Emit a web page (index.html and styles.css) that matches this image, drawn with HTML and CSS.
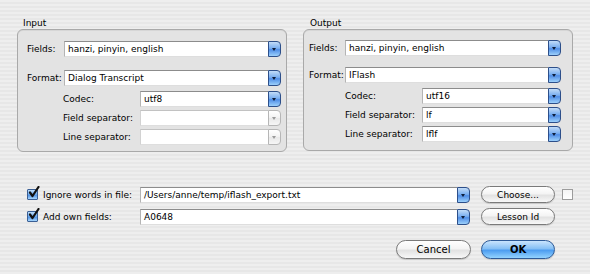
FILE: index.html
```html
<!DOCTYPE html>
<html lang="en">
<head>
    <meta charset="UTF-8">
    <title>Export</title>
    <link rel="stylesheet" href="styles.css">
</head>
<body>
    <div class="groups">
        <section class="group group-input">
            <div class="group-title">Input</div>
            <div class="group-box">
                <div class="row row-main">
                    <span class="lbl">Fields:</span>
                    <div class="combo"><span class="combo-text">hanzi, pinyin, english</span><span class="combo-btn"></span></div>
                </div>
                <div class="row row-main row-format">
                    <span class="lbl">Format:</span>
                    <div class="combo"><span class="combo-text">Dialog Transcript</span><span class="combo-btn"></span></div>
                </div>
                <div class="row row-sub row-codec">
                    <span class="sublbl">Codec:</span>
                    <div class="combo"><span class="combo-text">utf8</span><span class="combo-btn"></span></div>
                </div>
                <div class="row row-sub">
                    <span class="sublbl">Field separator:</span>
                    <div class="combo disabled"><span class="combo-text"></span><span class="combo-btn"></span></div>
                </div>
                <div class="row row-sub">
                    <span class="sublbl">Line separator:</span>
                    <div class="combo disabled"><span class="combo-text"></span><span class="combo-btn"></span></div>
                </div>
            </div>
        </section>
        <section class="group group-output">
            <div class="group-title">Output</div>
            <div class="group-box">
                <div class="row row-main">
                    <span class="lbl">Fields:</span>
                    <div class="combo"><span class="combo-text">hanzi, pinyin, english</span><span class="combo-btn"></span></div>
                </div>
                <div class="row row-main row-format">
                    <span class="lbl">Format:</span>
                    <div class="combo"><span class="combo-text">IFlash</span><span class="combo-btn"></span></div>
                </div>
                <div class="row row-sub row-codec">
                    <span class="sublbl">Codec:</span>
                    <div class="combo"><span class="combo-text">utf16</span><span class="combo-btn"></span></div>
                </div>
                <div class="row row-sub">
                    <span class="sublbl">Field separator:</span>
                    <div class="combo"><span class="combo-text">lf</span><span class="combo-btn"></span></div>
                </div>
                <div class="row row-sub">
                    <span class="sublbl">Line separator:</span>
                    <div class="combo"><span class="combo-text">lflf</span><span class="combo-btn"></span></div>
                </div>
            </div>
        </section>
    </div>

    <div class="extras">
        <div class="extra-row">
            <label class="check-label">
                <span class="checkbox checked"><svg width="13" height="13" viewBox="0 0 13 13"><path d="M3 6.5 L5.5 10 L11.5 1" fill="none" stroke="#111" stroke-width="2.2" stroke-linecap="round" stroke-linejoin="round"/></svg></span>
                Ignore words in file:
            </label>
            <div class="combo combo-wide"><span class="combo-text">/Users/anne/temp/iflash_export.txt</span><span class="combo-btn"></span></div>
            <button class="btn btn-small">Choose...</button>
            <span class="checkbox-plain"></span>
        </div>
        <div class="extra-row">
            <label class="check-label">
                <span class="checkbox checked"><svg width="13" height="13" viewBox="0 0 13 13"><path d="M3 6.5 L5.5 10 L11.5 1" fill="none" stroke="#111" stroke-width="2.2" stroke-linecap="round" stroke-linejoin="round"/></svg></span>
                Add own fields:
            </label>
            <div class="combo combo-wide"><span class="combo-text">A0648</span><span class="combo-btn"></span></div>
            <button class="btn btn-small">Lesson Id</button>
        </div>
    </div>

    <div class="actions">
        <button class="btn btn-large">Cancel</button>
        <button class="btn btn-large btn-default">OK</button>
    </div>
</body>
</html>
```

FILE: styles.css
```css
body {
    margin: 0;
    width: 590px;
    height: 274px;
    padding: 17px 0 0 17px;
    box-sizing: border-box;
    font-family: "DejaVu Sans", sans-serif;
    font-size: 9px;
    color: #000;
    background: repeating-linear-gradient(#eeeeee 0 2px, #e7e7e7 2px 4px);
    overflow: hidden;
}
.groups {
    display: flex;
    align-items: flex-start;
    gap: 16px;
}
.group {
    width: 270px;
}
.group-title {
    line-height: 12px;
    padding-left: 6px;
}
.group-output .group-title {
    padding-left: 7px;
}
.group-box {
    box-sizing: border-box;
    border: 1px solid #a9a9a9;
    border-radius: 6px;
    background: #e3e3e3;
    box-shadow: inset 0 1px 0 #d6d6d6;
    display: flex;
    flex-direction: column;
}
.group-input .group-box {
    padding: 11px 5px 6px 9px;
}
.group-output .group-box {
    padding: 10px 11px 8px 5px;
}
.row {
    display: flex;
    align-items: center;
    height: 16px;
}
.lbl {
    width: 37px;
    flex: none;
    white-space: nowrap;
}
.group-output .lbl {
    width: 36px;
}
.row-format {
    margin-top: 13px;
}
.group-output .row-format {
    margin-top: 11px;
}
.row-codec {
    margin-top: 5px;
}
.row-sub {
    padding-left: 36px;
}
.row-sub + .row-sub {
    margin-top: 3px;
}
.sublbl {
    width: 77px;
    flex: none;
    white-space: nowrap;
}
.combo {
    flex: 1;
    display: flex;
    height: 16px;
    min-width: 0;
}
.combo-text {
    flex: 1;
    box-sizing: border-box;
    background: #fff;
    border-top: 1px solid #8c8c8c;
    border-left: 1px solid #b4b4b4;
    border-bottom: 1px solid #dedede;
    padding: 0 0 0 3px;
    line-height: 14px;
    white-space: nowrap;
    overflow: hidden;
}
.combo-btn {
    position: relative;
    width: 13px;
    flex: none;
    box-sizing: border-box;
    border: 1px solid #2d4f8a;
    border-radius: 0 4px 4px 0;
    background: linear-gradient(#c2dcf8, #79aef0 45%, #4f8de6 55%, #9cd0fb);
}
.combo-btn::after {
    content: "";
    position: absolute;
    left: 3px;
    top: 6px;
    border-left: 2.5px solid transparent;
    border-right: 2.5px solid transparent;
    border-top: 3px solid #0d1e3c;
}
.combo.disabled .combo-text {
    border-top-color: #c2c2c2;
    border-left-color: #d2d2d2;
}
.combo.disabled .combo-btn {
    border-color: #b6b6b6;
    background: linear-gradient(#ffffff, #f2f2f2 50%, #e8e8e8 50%, #f6f6f6);
}
.combo.disabled .combo-btn::after {
    border-top-color: #9a9a9a;
}
.extras {
    margin-top: 34px;
    padding-left: 10px;
    display: flex;
    flex-direction: column;
    gap: 5px;
}
.extra-row {
    display: flex;
    align-items: center;
    height: 17px;
}
.check-label {
    width: 113px;
    flex: none;
    display: flex;
    align-items: center;
    gap: 5px;
    white-space: nowrap;
}
.checkbox {
    position: relative;
    width: 11px;
    height: 11px;
    box-sizing: border-box;
    flex: none;
    border: 1px solid #3a5f95;
    border-radius: 1px;
    background: linear-gradient(#bcdcfa, #6aa8ec 50%, #4d8fe2 55%, #a6d6fd);
}
.checkbox svg {
    position: absolute;
    left: -1px;
    top: -4px;
}
.combo-wide {
    flex: none;
    width: 330px;
}
.btn {
    font-family: "DejaVu Sans", sans-serif;
    color: #000;
    box-sizing: border-box;
    border: 1px solid #7a7a7a;
    padding: 0;
    background: linear-gradient(#ffffff, #f4f4f4 45%, #e2e2e2 55%, #f8f8f8);
    box-shadow: 0 1px 1px rgba(0, 0, 0, 0.15);
}
.btn-small {
    width: 74px;
    height: 17px;
    margin-left: 11px;
    border-radius: 9px;
    font-size: 9px;
}
.checkbox-plain {
    width: 11px;
    height: 11px;
    box-sizing: border-box;
    margin-left: 7px;
    border: 1px solid #9c9c9c;
    background: linear-gradient(#f4f4f4, #ffffff);
}
.actions {
    display: flex;
    justify-content: flex-end;
    gap: 10px;
    margin-top: 15px;
    padding-right: 35px;
}
.btn-large {
    width: 75px;
    height: 19px;
    border-radius: 10px;
    font-size: 10px;
}
.btn-default {
    width: 74px;
    border-color: #2d5a97;
    font-weight: bold;
    background: linear-gradient(#c9e4fd, #86c0f5 45%, #4d9df0 55%, #93d3ff);
}
```
